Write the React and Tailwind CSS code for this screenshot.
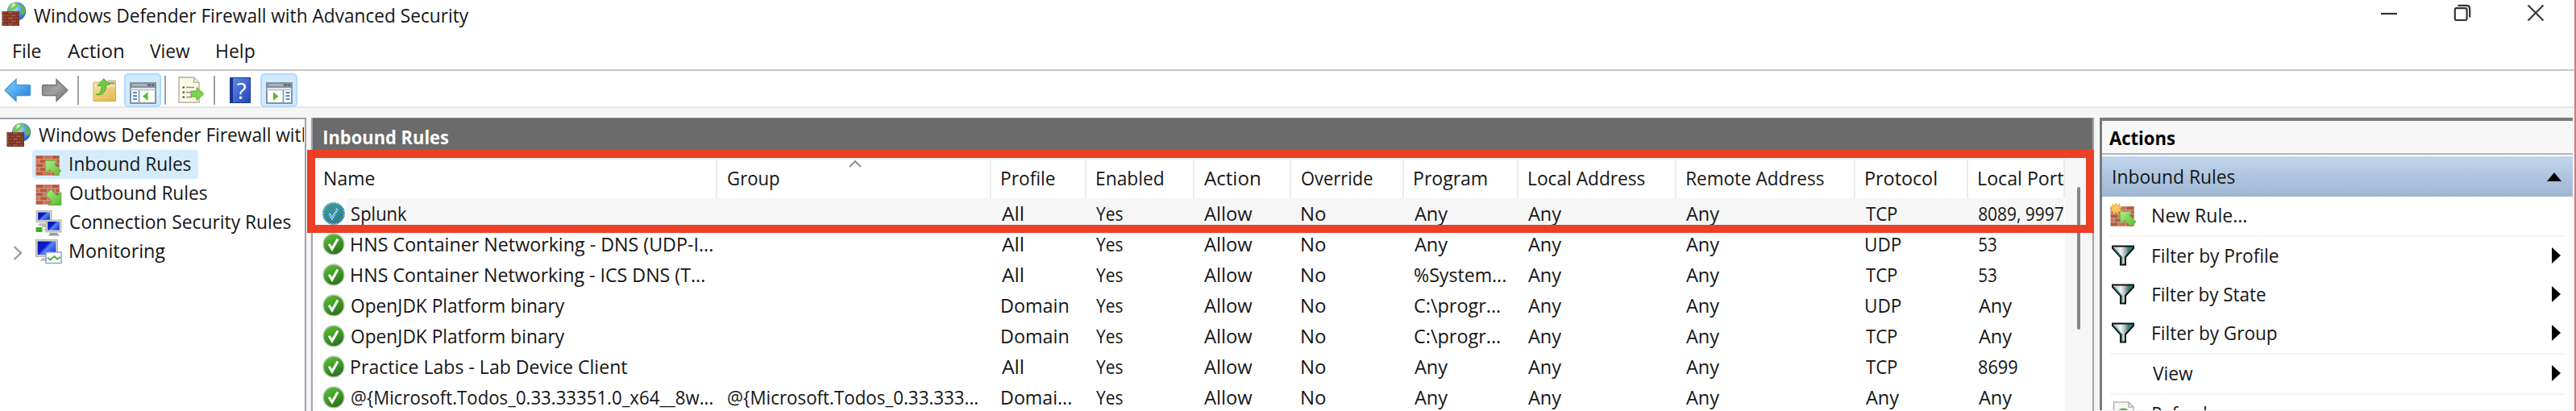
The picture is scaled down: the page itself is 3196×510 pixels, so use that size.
import React from "react";

const FAMILY = '"Open Sans", "Noto Sans", sans-serif';
const canvas = document.createElement("canvas").getContext("2d");

// A line of text whose inked width is w pixels.
function T({ w, bold, children }) {
  canvas.font = `${bold ? "700" : "400"} 24px ${FAMILY}`;
  const m = canvas.measureText(children);
  const scale = w / (m.actualBoundingBoxLeft + m.actualBoundingBoxRight);
  return (
    <span className="block shrink-0 whitespace-pre" style={{ width: w }}>
      <span
        className={bold ? "inline-block origin-left font-bold" : "inline-block origin-left"}
        style={{ transform: `translateX(${m.actualBoundingBoxLeft * scale}px) scaleX(${scale})` }}
      >
        {children}
      </span>
    </span>
  );
}

function Bricks({ x, y, w, h, light }) {
  const rows = 5;
  const rh = h / rows;
  const bw = w / 3;
  const out = [];
  for (let r = 0; r < rows; r++) {
    const off = r % 2 ? bw / 2 : 0;
    for (let c = 0; c < 4; c++) {
      const x0 = Math.max(x, x + c * bw - off);
      const x1 = Math.min(x + w, x + (c + 1) * bw - off);
      if (x1 - x0 > 1.5) {
        out.push(
          <rect key={`${r}-${c}`} x={x0 + 0.3} y={y + r * rh + 0.3} width={x1 - x0 - 1.1} height={rh - 1.1} fill={(r + c) % 2 ? (light ? "#cb6f50" : "#a9553d") : light ? "#b8583b" : "#944431"} />
        );
      }
    }
  }
  return (
    <g>
      <rect x={x} y={y} width={w} height={h} fill={light ? "#c7a193" : "#6b2f22"} />
      {out}
    </g>
  );
}

const Defs = () => (
  <svg width="0" height="0" className="absolute">
    <defs>
      <radialGradient id="globe" cx="0.4" cy="0.35" r="0.75">
        <stop offset="0" stopColor="#a8dcff" />
        <stop offset="0.6" stopColor="#3f8fe6" />
        <stop offset="1" stopColor="#1f51b8" />
      </radialGradient>
      <linearGradient id="blueArrow" x1="0" y1="0" x2="1" y2="1">
        <stop offset="0" stopColor="#8fd2fb" />
        <stop offset="0.5" stopColor="#4fa9ef" />
        <stop offset="1" stopColor="#2377cf" />
      </linearGradient>
      <linearGradient id="grayArrow" x1="0" y1="0" x2="1" y2="1">
        <stop offset="0" stopColor="#7d7d7d" />
        <stop offset="0.5" stopColor="#a2a2a2" />
        <stop offset="1" stopColor="#6a6a6a" />
      </linearGradient>
      <linearGradient id="green" x1="0" y1="0" x2="1" y2="1">
        <stop offset="0" stopColor="#aef083" />
        <stop offset="1" stopColor="#58b530" />
      </linearGradient>
      <linearGradient id="folder" x1="0" y1="0" x2="0.6" y2="1">
        <stop offset="0" stopColor="#fbe9a4" />
        <stop offset="1" stopColor="#e5bd5c" />
      </linearGradient>
      <linearGradient id="check" x1="0.2" y1="0" x2="0.7" y2="1">
        <stop offset="0" stopColor="#5cc238" />
        <stop offset="0.55" stopColor="#3c9626" />
        <stop offset="1" stopColor="#2c6c1c" />
      </linearGradient>
      <linearGradient id="screen" x1="0" y1="0" x2="1" y2="0.7">
        <stop offset="0" stopColor="#0713a8" />
        <stop offset="0.45" stopColor="#0a1ed0" />
        <stop offset="0.6" stopColor="#5d83f5" />
        <stop offset="1" stopColor="#1b3ee0" />
      </linearGradient>
      <linearGradient id="funnel" x1="0" y1="0" x2="1" y2="0">
        <stop offset="0.1" stopColor="#bfc6c6" />
        <stop offset="0.4" stopColor="#f2f2f2" />
        <stop offset="0.6" stopColor="#a9b4b4" />
        <stop offset="0.75" stopColor="#2f8585" />
      </linearGradient>
      <pattern id="dither" width="3.6" height="3.6" patternUnits="userSpaceOnUse">
        <rect width="1.8" height="1.8" fill="#2f86d8" />
        <rect x="1.8" y="1.8" width="1.8" height="1.8" fill="#2f86d8" />
      </pattern>
    </defs>
  </svg>
);

const Svg = ({ w = 32, h = 32, children }) => (
  <svg width={w} height={h} viewBox={`0 0 ${w} ${h}`} className="block shrink-0">
    {children}
  </svg>
);

const FirewallIcon = () => (
  <Svg w={31} h={31}>
    <circle cx="18.5" cy="12" r="11.6" fill="url(#globe)" />
    <path d="M9.5 5 C12 1.5 17 .6 19.5 1.6 L20.5 5 L17 9 L12 12 L8 11 Z" fill="#7cc653" />
    <path d="M23 3 C27.5 5 29.5 9 29.5 13 L26.5 17 L24 14.5 L25 9.5 L22.5 6.5 Z" fill="#64b848" />
    <path d="M13 3 L17 2 L17 5 L12 8 Z" fill="#d3f1c0" />
    <Bricks x={0.5} y={12} w={21.5} h={18} />
  </Svg>
);

const WallArrow = ({ dir, star }) => (
  <Svg w={33} h={32}>
    <Bricks x={0.5} y={4} w={29.5} h={25} light />
    {dir === "in" ? (
      <path d="M12 10.5 L27 10.5 L23.5 15 L32 23 L26 29.5 L18 21 L13 25.5 Z" fill="url(#green)" stroke="#6cbd45" />
    ) : (
      <path d="M19 10 L27 18 L31.8 13.5 L31.8 29.5 L16 29.5 L20.5 25 L13 16.5 Z" fill="url(#green)" stroke="#5fb03a" />
    )}
    {star && (
      <path d="M7 -1 L8.6 3 L12 .6 L11.3 4.6 L15.2 5 L11.8 7.6 L14.4 11 L10.2 10.4 L9.6 14.4 L7 11.2 L4.2 14.2 L3.6 10.2 L0 10.6 L2.4 7.4 L0 4.6 L3.2 4.6 L2.6 1 L5.6 3 Z" fill="#f9c455" stroke="#e8a33a" strokeWidth="0.6" />
    )}
  </Svg>
);

const Monitor = ({ x, y, w, h }) => (
  <g>
    <rect x={x} y={y} width={w} height={h} fill="#d2d2cb" stroke="#a9a9a4" strokeWidth="0.8" />
    <rect x={x + 2.2} y={y + 2} width={w - 4.4} height={h - 4.4} fill="url(#screen)" />
  </g>
);

const ConnectionIcon = () => (
  <Svg w={33} h={32}>
    <Monitor x={1} y={0.5} w={19} h={14} />
    <path d="M5 16h11l2 3H3z" fill="#bdbdb8" />
    <path d="M8 20 h6 v4 h-3" fill="none" stroke="#777" strokeWidth="1.2" />
    <rect x="0.5" y="21" width="8" height="6" rx="1" fill="#35b51e" />
    <Monitor x={13} y={12} w={19} h={15} />
    <path d="M18 28h9l3 3.4H16z" fill="#9c9c98" />
  </Svg>
);

const MonitoringIcon = () => (
  <Svg w={33} h={32}>
    <Monitor x={0.5} y={0.5} w={27} h={21} />
    <path d="M8 23h9v4H6z" fill="#c4c4c0" />
    <rect x="13" y="16" width="19" height="13.5" fill="#fff" stroke="#7d9fd0" strokeWidth="1.4" />
    <path d="M15 22.5 l3.5 3 l5 -4.5 l3.5 3.5 l4 -2.5" fill="none" stroke="#4faa36" strokeWidth="1.8" />
  </Svg>
);

const CheckIcon = ({ selected }) => (
  <Svg w={28} h={28}>
    <circle cx="14" cy="14" r="13" fill="url(#check)" stroke="#c3ccc0" strokeWidth="1.4" />
    <path d="M8.2 13.8 l3.8 6.2 l7 -12.5" fill="none" stroke="#fff" strokeWidth="3.1" />
    {selected && <circle cx="14" cy="14" r="14" fill="url(#dither)" />}
    {selected && <circle cx="14" cy="14" r="13.5" fill="#2f86d8" opacity="0.2" />}
  </Svg>
);

const FunnelIcon = () => (
  <Svg w={30} h={26}>
    <path d="M2 1.5 H28 V4 L18 15 V24.5 H12 V15 L2 4 Z" fill="url(#funnel)" stroke="#111" strokeWidth="2" />
    <path d="M4 4.5 L13.5 15 V23" fill="none" stroke="#2f8585" strokeWidth="1.6" />
  </Svg>
);

const BackIcon = () => (
  <Svg w={34} h={30}>
    <path d="M1 15 L15 1.5 V8.5 H31 Q32.5 8.5 32.5 10 V20 Q32.5 21.5 31 21.5 H15 V28.5 Z" fill="url(#blueArrow)" stroke="#4596d8" strokeWidth="1.4" />
  </Svg>
);

const ForwardIcon = () => (
  <Svg w={34} h={30}>
    <path d="M33 15 L19 1.5 V8.5 H3 Q1.5 8.5 1.5 10 V20 Q1.5 21.5 3 21.5 H19 V28.5 Z" fill="url(#grayArrow)" stroke="#777" strokeWidth="1.4" />
  </Svg>
);

const FolderUpIcon = () => (
  <Svg w={30} h={30}>
    <path d="M1 6 Q1 5 2 5 H17 L19 3 H27.5 Q28.5 3 28.5 4 V28.5 H1 Z" fill="url(#folder)" stroke="#d2a94f" />
    <path d="M20 6h7" stroke="#5aa5e8" strokeWidth="2" />
    <path d="M1.5 10 H28" stroke="#f9eec0" strokeWidth="1.2" />
    <path d="M4 20 C9 20 11.5 16 11 9.5 L6 9.5 L13.5 0.8 L21.5 7.5 L16.5 8.8 C17.5 15 13.5 21 6.5 21 Z" fill="#6fc945" stroke="#4ba52a" strokeWidth="0.9" />
  </Svg>
);

const PaneIcon = ({ right }) => (
  <Svg w={33} h={27}>
    <rect x="1" y="1" width="31" height="25" fill="#fff" stroke="#8492a0" strokeWidth="2" />
    <rect x="1" y="1" width="31" height="6" fill="#8492a0" />
    <path d="M3 3.5h18" stroke="#c3ccd5" strokeWidth="1.6" />
    <path d="M23 3.5h2.5M27.5 3.5h2.5" stroke="#4a5866" strokeWidth="1.8" />
    <path d="M1 9.2h31" stroke="#c6ced6" strokeWidth="2.6" />
    {right ? (
      <g>
        <path d="M21.5 10v15" stroke="#8492a0" strokeWidth="1.6" />
        <path d="M24.5 13h5M24.5 17h5M24.5 21h5" stroke="#4d87cf" strokeWidth="1.9" />
        <path d="M9 12 L15.5 17.5 L9 23 Z" fill="#5cb83a" />
      </g>
    ) : (
      <g>
        <path d="M11.5 10v15" stroke="#8492a0" strokeWidth="1.6" />
        <path d="M4 13h5M4 17h5M4 21h5" stroke="#4d87cf" strokeWidth="1.9" />
        <path d="M22.5 12 L16 17.5 L22.5 23 Z" fill="#5cb83a" />
      </g>
    )}
  </Svg>
);

const ExportIcon = () => (
  <Svg w={33} h={33}>
    <path d="M1 1 H19.5 L26 7.5 V32 H1 Z" fill="#fdfae4" stroke="#b1ada0" strokeWidth="1.4" />
    <path d="M19.5 1 V7.5 H26" fill="#e8e4d4" stroke="#b1ada0" strokeWidth="1.2" />
    <path d="M5.5 13.5h2.5M5.5 19.5h2.5M5.5 25.5h2.5" stroke="#444" strokeWidth="2" />
    <path d="M10 13.5h10M10 19.5h7M10 25.5h7" stroke="#8a8698" strokeWidth="1.6" />
    <path d="M16 18 H23 V13.5 L32 21.5 L23 29.5 V25 H16 Z" fill="#7fd250" stroke="#58b02f" />
  </Svg>
);

const HelpIcon = () => (
  <span className="flex h-[32px] w-[26px] shrink-0 items-center justify-center border border-l-4 border-[#18358f] bg-gradient-to-br from-[#5f86e6] to-[#2347b8] text-[28px] leading-[30px] text-white">
    ?
  </span>
);

const RefreshIcon = () => (
  <Svg w={28} h={32}>
    <path d="M1.5 1 H20 L26 7 V31 H1.5 Z" fill="#f8f8f6" stroke="#b4b4b4" strokeWidth="1.6" />
    <path d="M20 1 V7 H26" fill="none" stroke="#b4b4b4" strokeWidth="1.6" />
    <circle cx="13.5" cy="17" r="8.5" fill="#55b436" />
  </Svg>
);

const ToolSep = () => <span className="h-[36px] w-[2px] shrink-0 bg-[#a0a0a0]" />;

const ActiveTool = ({ children }) => (
  <span className="flex h-[42px] w-[46px] shrink-0 items-center justify-center rounded-[5px] border-2 border-[#b0dafd] bg-[#d2eafc] pt-[8px]">
    {children}
  </span>
);

const HEADERS = [
  ["Name", 62, "w-[502px] pl-[15px]"],
  ["Group", 64, "w-[340px] pl-[13px]"],
  ["Profile", 66, "w-[118px] pl-[13px]"],
  ["Enabled", 82, "w-[134px] pl-[13px]"],
  ["Action", 69, "w-[120px] pl-[12px]"],
  ["Override", 88, "w-[140px] pl-[13px]"],
  ["Program", 90, "w-[142px] pl-[13px]"],
  ["Local Address", 144, "w-[196px] pl-[13px]"],
  ["Remote Address", 170, "w-[222px] pl-[13px]"],
  ["Protocol", 88, "w-[140px] pl-[13px]"],
  ["Local Port", 105, "w-[120px] pl-[13px]"],
];

const WIDTHS = {
  All: 27, Yes: 33, Allow: 60, No: 30, Any: 42, TCP: 39, UDP: 44, Domain: 82, "Domai...": 86,
  "%System...": 113, "C:\\progr...": 106, "8089, 9997": 105, 53: 22, 8699: 48,
  "@{Microsoft.Todos_0.33.333...": 310,
};

const RULES = [
  ["Splunk", 69, "", "All", "Any", "TCP", "8089, 9997"],
  ["HNS Container Networking - DNS (UDP-I...", 448, "", "All", "Any", "UDP", "53"],
  ["HNS Container Networking - ICS DNS (T...", 438, "", "All", "%System...", "TCP", "53"],
  ["OpenJDK Platform binary", 265, "", "Domain", "C:\\progr...", "UDP", "Any"],
  ["OpenJDK Platform binary", 265, "", "Domain", "C:\\progr...", "TCP", "Any"],
  ["Practice Labs - Lab Device Client", 342, "", "All", "Any", "TCP", "8699"],
  ["@{Microsoft.Todos_0.33.33351.0_x64__8w...", 448, "@{Microsoft.Todos_0.33.333...", "Domai...", "Any", "Any", "Any"],
];

const Cell = ({ text, className }) => (
  <div className={`shrink-0 ${className}`}>{text && <T w={WIDTHS[text]}>{text}</T>}</div>
);

function RuleRow({ rule, selected }) {
  const [name, w, group, profile, program, protocol, port] = rule;
  return (
    <div className="flex h-[38px] shrink-0 leading-[38px]">
      <div className="flex w-[42px] shrink-0 items-center pb-[1px] pl-[12px]">
        <CheckIcon selected={selected} />
      </div>
      <div className={selected ? "flex w-[2130px] shrink-0 bg-[#f6f6f6]" : "flex w-[2130px] shrink-0"}>
        <div className="w-[460px] shrink-0 pl-[6px]"><T w={w}>{name}</T></div>
        <Cell text={group} className="w-[340px] pl-[13px]" />
        <Cell text={profile} className="w-[118px] pl-[13px]" />
        <Cell text="Yes" className="w-[134px] pl-[12px]" />
        <Cell text="Allow" className="w-[120px] pl-[12px]" />
        <Cell text="No" className="w-[140px] pl-[13px]" />
        <Cell text={program} className="w-[142px] pl-[13px]" />
        <Cell text="Any" className="w-[196px] pl-[12px]" />
        <Cell text="Any" className="w-[222px] pl-[12px]" />
        <Cell text={protocol} className="w-[140px] pl-[13px]" />
        <Cell text={port} className="w-[118px] pl-[13px]" />
      </div>
    </div>
  );
}

function TreeItem({ icon, text, w, selected, chevron }) {
  return (
    <div className="flex h-[36px] shrink-0">
      <div className="flex w-[40px] shrink-0 items-center pt-[3px] pl-[16px]">
        {chevron && (
          <Svg w={12} h={20}>
            <path d="M1.5 2 L10 10 L1.5 18" fill="none" stroke="#9a9a9a" strokeWidth="2.4" />
          </Svg>
        )}
      </div>
      <div className={selected ? "flex h-[36px] w-[206px] rounded-[4px] bg-[#d5ecfc] pl-[4px]" : "flex h-[36px] pl-[4px]"}>
        <div className="w-[43px] shrink-0 pt-[3px]">{icon}</div>
        <div className="leading-[34px]"><T w={w}>{text}</T></div>
      </div>
    </div>
  );
}

function ActionItem({ icon, text, w, arrow }) {
  return (
    <div className="flex h-[48px] shrink-0 items-center pr-[15px] pl-[10px] leading-[46px]">
      <div className="w-[53px] shrink-0">{icon}</div>
      <div className="pb-[2px]"><T w={w}>{text}</T></div>
      {arrow && (
        <div className="ml-auto pb-[2px]">
          <Svg w={11} h={20}><path d="M0 0 L11 10 L0 20 Z" fill="#000" /></Svg>
        </div>
      )}
    </div>
  );
}

const ActionSep = () => <div className="mr-[11px] ml-[10px] h-[2px] shrink-0 bg-[#f4f4f4]" />;

export default function App() {
  return (
    <div className="relative flex h-[510px] w-[3196px] overflow-hidden bg-white font-['Open_Sans','Noto_Sans',sans-serif] text-[24px] text-[#161616]">
      <Defs />
      <div className="flex w-[3194px] shrink-0 flex-col">
        <header className="flex h-[37px] shrink-0 items-start pl-[2px] leading-[37px]">
          <div className="w-[40px] pt-[2px]"><FirewallIcon /></div>
          <T w={540}>Windows Defender Firewall with Advanced Security</T>
          <div className="mt-[5px] mr-[37px] ml-auto flex items-center gap-[69px]">
            <Svg w={22} h={22}><path d="M1 12h20" stroke="#333" strokeWidth="2.2" /></Svg>
            <Svg w={22} h={22}>
              <rect x="1.8" y="5.2" width="14.8" height="14.8" rx="2" fill="none" stroke="#333" strokeWidth="2.2" />
              <path d="M5.5 1.8 H16 Q20.2 1.8 20.2 6 V16.5" fill="none" stroke="#333" strokeWidth="2.2" />
            </Svg>
            <Svg w={22} h={22}><path d="M1.5 1.5 L20.5 20.5 M20.5 1.5 L1.5 20.5" stroke="#333" strokeWidth="2" /></Svg>
          </div>
        </header>
        <nav className="flex h-[49px] shrink-0 gap-[33px] pt-[1px] pl-[17px] leading-[49px]">
          <T w={34}>File</T>
          <T w={69}>Action</T>
          <T w={50}>View</T>
          <T w={47}>Help</T>
        </nav>
        <div className="flex h-[48px] shrink-0 items-center border-t-2 border-b-2 border-t-[#c4c7c9] border-b-[#e6e6e6] pt-[3px] pl-[5px]">
          <BackIcon />
          <div className="w-[12px]" />
          <ForwardIcon />
          <div className="w-[11px]" />
          <ToolSep />
          <div className="w-[17px]" />
          <FolderUpIcon />
          <div className="w-[9px]" />
          <ActiveTool><PaneIcon /></ActiveTool>
          <div className="w-[4px]" />
          <ToolSep />
          <div className="w-[15px]" />
          <ExportIcon />
          <div className="w-[11px]" />
          <ToolSep />
          <div className="w-[18px]" />
          <HelpIcon />
          <div className="w-[12px]" />
          <ActiveTool><PaneIcon right /></ActiveTool>
        </div>
        <div className="flex grow bg-[#f5f5f5] pt-[12px]">
          <aside className="flex h-[364px] w-[380px] shrink-0 flex-col overflow-hidden border-t-2 border-r-2 border-[#a0a3ae] bg-white">
            <div className="mr-[1px] flex h-[38px] shrink-0 overflow-hidden pl-[8px] leading-[37px]">
              <div className="w-[40px] shrink-0 pt-[4px]"><FirewallIcon /></div>
              <T w={540}>Windows Defender Firewall with Advanced Security</T>
            </div>
            <TreeItem icon={<WallArrow dir="in" />} text="Inbound Rules" w={150} selected />
            <TreeItem icon={<WallArrow dir="out" />} text="Outbound Rules" w={170} />
            <TreeItem icon={<ConnectionIcon />} text="Connection Security Rules" w={274} />
            <TreeItem icon={<MonitoringIcon />} text="Monitoring" w={118} chevron />
          </aside>
          <main className="ml-[6px] flex h-[364px] w-[2212px] shrink-0 flex-col border-r-2 border-l-2 border-[#a0a3ae] bg-white">
            <div className="h-[50px] shrink-0 border-t border-t-[#8c8c8c] bg-[#6b6b6b] pl-[14px] leading-[45px] text-white">
              <T w={155} bold>Inbound Rules</T>
            </div>
            <div className="flex h-[314px]">
              <div className="flex w-[2174px] shrink-0 flex-col overflow-hidden">
                <div className="relative flex h-[50px] shrink-0 border-t-2 border-t-[#e8eaec] leading-[46px]">
                  {HEADERS.map(([text, w, cls]) => (
                    <div key={text} className={`shrink-0 border-r-2 border-[#ececec] last:border-r-0 ${cls}`}>
                      <T w={w}>{text}</T>
                    </div>
                  ))}
                  <div className="absolute top-0 left-[665px]">
                    <Svg w={16} h={10}><path d="M1 9 L8 2 L15 9" fill="none" stroke="#8a8a8a" strokeWidth="1.8" /></Svg>
                  </div>
                </div>
                {RULES.map((r, i) => <RuleRow key={i} rule={r} selected={i === 0} />)}
              </div>
              <div className="grow bg-[#f6f6f6] pt-[36px] pl-[15px]">
                <div className="h-[177px] w-[4px] rounded-full bg-[#858585]" />
              </div>
            </div>
          </main>
          <section className="ml-[7px] flex h-[363px] w-[587px] shrink-0 flex-col overflow-hidden border-t-4 border-l-3 border-[#7a7a7a] bg-white">
            <div className="h-[42px] shrink-0 border-b-2 border-b-[#b4b4b4] bg-[#f7f7f7] pl-[9px] leading-[42px] text-black">
              <T w={82} bold>Actions</T>
            </div>
            <div className="mt-[2px] flex h-[50px] shrink-0 items-center bg-gradient-to-b from-[#c1d5ed] to-[#9db6d2] pr-[14px] pl-[14px]">
              <T w={151}>Inbound Rules</T>
              <div className="ml-auto">
                <Svg w={18} h={11}><path d="M9 0 L18 11 H0 Z" fill="#000" /></Svg>
              </div>
            </div>
            <ActionItem icon={<WallArrow dir="in" star />} text="New Rule..." w={116} />
            <ActionSep />
            <ActionItem icon={<div className="pb-[2px] pl-[1px]"><FunnelIcon /></div>} text="Filter by Profile" w={156} arrow />
            <ActionItem icon={<div className="pb-[2px] pl-[1px]"><FunnelIcon /></div>} text="Filter by State" w={140} arrow />
            <ActionItem icon={<div className="pb-[2px] pl-[1px]"><FunnelIcon /></div>} text="Filter by Group" w={154} arrow />
            <ActionSep />
            <ActionItem text="View" w={50} arrow />
            <ActionSep />
            <ActionItem icon={<div className="pl-[3px]"><RefreshIcon /></div>} text="Refresh" w={74} />
          </section>
        </div>
      </div>
      <div className="w-[2px] shrink-0 bg-[#d97878]" />
      <div className="absolute top-[186px] left-[381px] h-[103px] w-[2217px] border-[10px] border-[#eb4026]" />
    </div>
  );
}
